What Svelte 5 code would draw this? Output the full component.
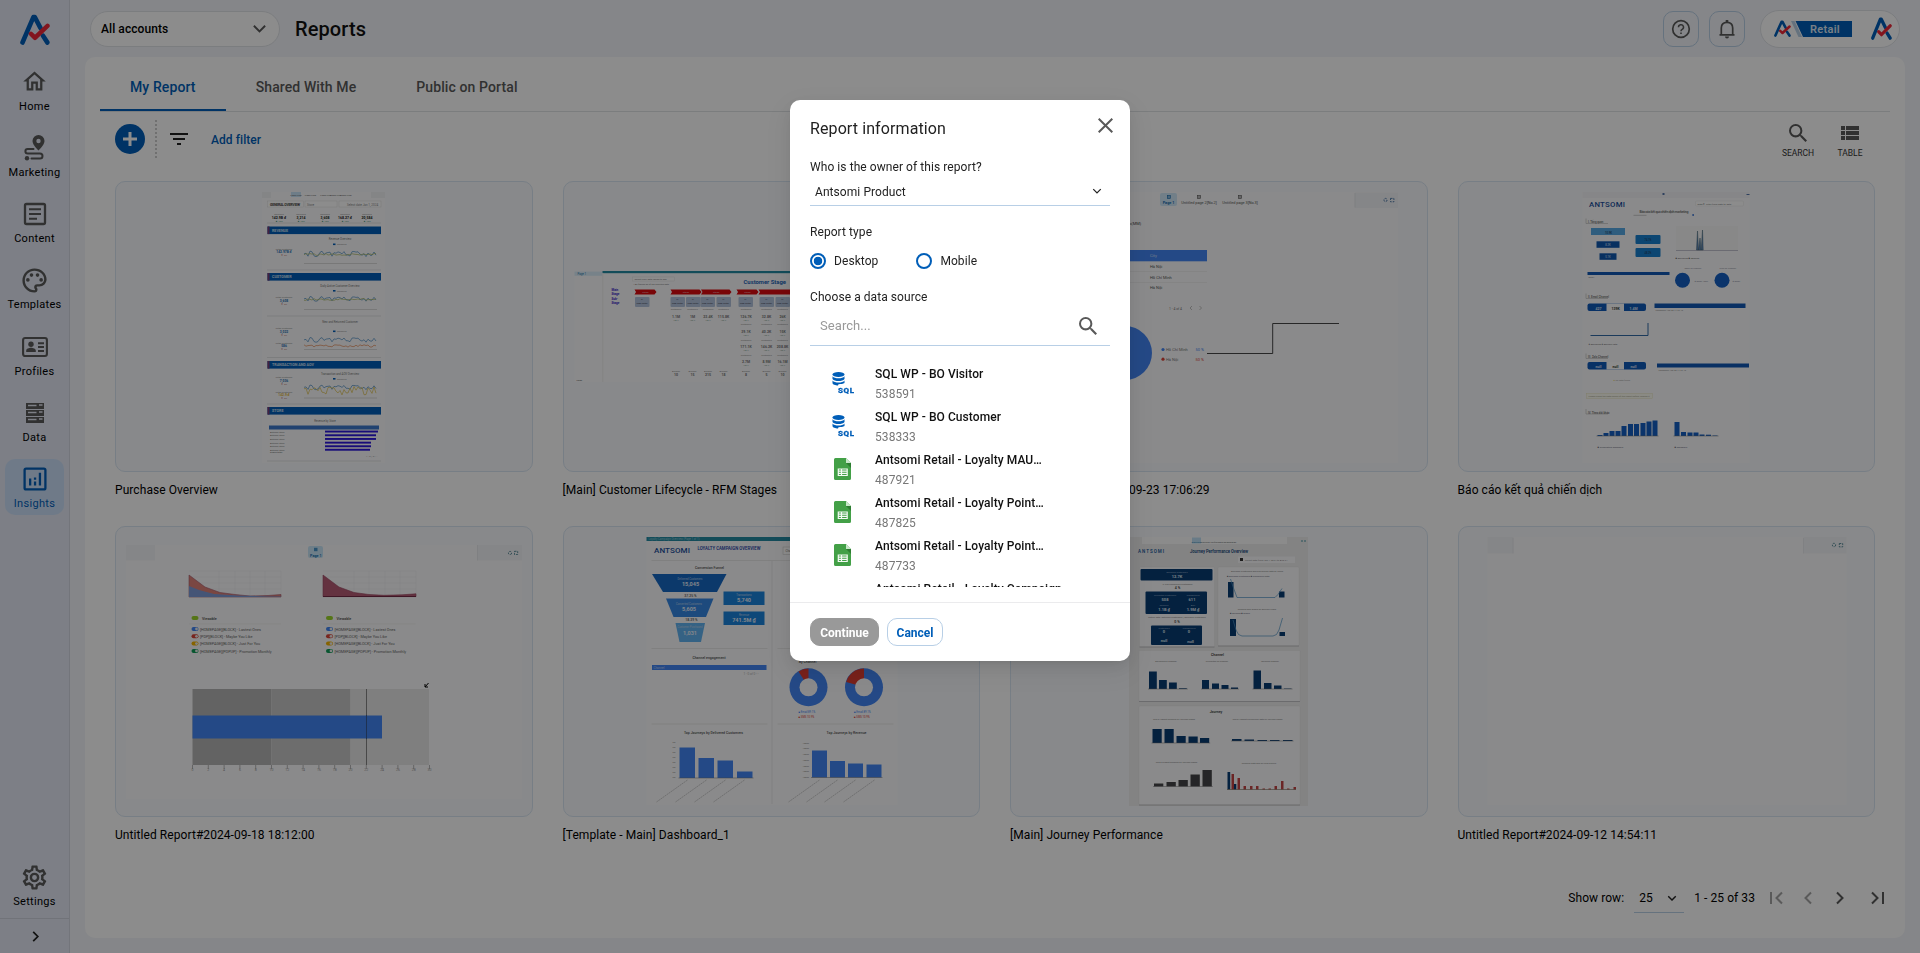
<script>
  const nav = [
    { label: 'Home', icon: 'home' },
    { label: 'Marketing', icon: 'marketing' },
    { label: 'Content', icon: 'content' },
    { label: 'Templates', icon: 'templates' },
    { label: 'Profiles', icon: 'profiles' },
    { label: 'Data', icon: 'data' },
    { label: 'Insights', icon: 'insights', active: true }
  ];
  const tabs = ['My Report', 'Shared With Me', 'Public on Portal'];
  const reports = [
    { title: 'Purchase Overview', x: 115, y: 181 },
    { title: '[Main] Customer Lifecycle - RFM Stages', x: 562.5, y: 181 },
    { title: 'Untitled Report#2024-09-23 17:06:29', x: 1010, y: 181 },
    { title: 'Báo cáo kết quả chiến dịch', x: 1457.5, y: 181 },
    { title: 'Untitled Report#2024-09-18 18:12:00', x: 115, y: 526 },
    { title: '[Template - Main] Dashboard_1', x: 562.5, y: 526 },
    { title: '[Main] Journey Performance', x: 1010, y: 526 },
    { title: 'Untitled Report#2024-09-12 14:54:11', x: 1457.5, y: 526 }
  ];
  const sources = [
    { name: 'SQL WP - BO Visitor', id: '538591', kind: 'sql' },
    { name: 'SQL WP - BO Customer', id: '538333', kind: 'sql' },
    { name: 'Antsomi Retail - Loyalty MAU…', id: '487921', kind: 'sheet' },
    { name: 'Antsomi Retail - Loyalty Point…', id: '487825', kind: 'sheet' },
    { name: 'Antsomi Retail - Loyalty Point…', id: '487733', kind: 'sheet' },
    { name: 'Antsomi Retail - Loyalty Campaign', id: '', kind: 'none' }
  ];
  // small preview charts
  function wave(x0, x1, y, amp, seed) {
    let s = seed, d = '';
    for (let x = x0; x <= x1; x += 2) {
      s = (s * 73 + 41) % 101;
      d += (d ? 'L' : 'M') + x + ' ' + (y + (s / 101 - 0.5) * amp).toFixed(1);
    }
    return d;
  }
  const kpis = [['142.9B đ', 279], ['3,214', 301], ['3,608', 325], ['168.27 đ', 345], ['20,584', 367]];
  const bands = [['REVENUE', 226.5], ['CUSTOMER', 273], ['TRANSACTION AND AOV', 361], ['STORE', 407]];
  const rev = [[378, 430.6], [376, 434.3], [376, 438], [371, 441.7], [371, 445.3], [370, 448.8]];
  const stageCols = [
    [675.5, ['1.1M'], '10'], [692, ['1M'], '15'], [707.5, ['23.4K'], '215'], [723, ['115.8K'], '18'],
    [745.5, ['126.7K', '39.1K', '171.1K', '2.7M'], '8'], [766, ['32.8K', '40.2K', '146.2K', '8.9M'], '5'],
    [782, ['26K', '15K', '208.8K', '16.1M'], '10']
  ];
  const legend = [['#4285f4', '[HOMEPAGE][BLOCK] - Lastest Ones'], ['#db4437', '[PDP][BLOCK] - Maybe You Like'], ['#f4b400', '[HOMEPAGE][BLOCK] - Just For You'], ['#0f9d58', '[HOMEPAGE][POPUP] - Promotion Monthly']];
  const growth = [[1597, 435], [1603, 433], [1609, 431], [1615, 431], [1621, 426], [1627.5, 424], [1633.5, 424], [1640, 423], [1646, 421.5], [1652, 420.5]];
  const fall = [[1674, 422], [1680.5, 432], [1687, 432.5], [1693, 432.5], [1699, 434.5], [1705.5, 434.7], [1712, 435.5]];
  const red = [[1231.5, 774], [1237.5, 778], [1243.5, 786], [1250, 786], [1256, 786], [1262.5, 788.5], [1268.5, 788.5], [1274.5, 786], [1281, 781], [1287, 788.5], [1293.5, 787]];
</script>

{#snippet logo(w, h)}
  <svg width={w} height={h} viewBox="0 0 30 30" fill="none" stroke-linecap="round" stroke-linejoin="round" preserveAspectRatio="none">
    <path d="M2.500 27.500 13.400 3h1.400l5.600 10.500" stroke="#005eb8" stroke-width="4.600" />
    <path d="m23 21 4.300 6.500" stroke="#005eb8" stroke-width="4.600" />
    <path d="m11 19.200 4 3.800 12.500-11.500" stroke="#ee2737" stroke-width="4.400" />
  </svg>
{/snippet}

{#snippet glyph(name)}
  {#if name === 'home'}
    <svg width="27" height="27" viewBox="0 0 24 24"><path d="m12 5.69 5 4.5V18h-2v-6H9v6H7v-7.81zM12 3 2 12h3v8h6v-6h2v6h6v-8h3z" /></svg>
  {:else if name === 'marketing'}
    <svg width="27" height="27" viewBox="0 0 27 27"><path d="M17.5 1a6 6 0 0 0-6 6c0 4 6 9.500 6 9.500s6-5.500 6-9.500a6 6 0 0 0-6-6zm0 8.200a2.200 2.200 0 1 1 0-4.400 2.200 2.200 0 0 1 0 4.400z" /><path d="M12.500 15H6.700a2.300 2.300 0 0 0 0 4.600H19a2.500 2.500 0 0 1 0 5h-8.500" fill="none" stroke="#595959" stroke-width="2" stroke-linecap="round" /><circle cx="6" cy="24.300" r="2.200" /></svg>
  {:else if name === 'content'}
    <svg width="24" height="24" viewBox="0 0 24 24" fill="none" stroke="#595959"><rect x="2" y="2" width="20" height="20" rx="1.500" stroke-width="2.300" /><path d="M6 7.300h12M6 12h12M6 16.700h8" stroke-width="2" /></svg>
  {:else if name === 'templates'}
    <svg width="29" height="29" viewBox="0 0 24 24"><path d="M12 22C6.490 22 2 17.510 2 12S6.490 2 12 2s10 4.040 10 9c0 3.310-2.690 6-6 6h-1.770c-.28 0-.5.22-.5.5 0 .12.05.23.13.33.41.47.64 1.060.64 1.670A2.500 2.500 0 0 1 12 22m0-18c-4.410 0-8 3.590-8 8s3.590 8 8 8c.28 0 .5-.22.5-.5a.54.54 0 0 0-.14-.35c-.41-.46-.63-1.050-.63-1.650a2.500 2.500 0 0 1 2.500-2.500H16c2.210 0 4-1.790 4-4 0-3.860-3.590-7-8-7" /><circle cx="6.500" cy="11.500" r="1.500" /><circle cx="9.500" cy="7.500" r="1.500" /><circle cx="14.500" cy="7.500" r="1.500" /><circle cx="17.500" cy="11.500" r="1.500" /></svg>
  {:else if name === 'profiles'}
    <svg width="26" height="22" viewBox="0 0 26 22"><rect x="1.100" y="2" width="23.800" height="18" rx="2" fill="none" stroke="#595959" stroke-width="2.100" /><circle cx="9" cy="8.200" r="2.700" /><path d="M4.200 16v-1.500c0-1.800 3-2.800 4.800-2.800s4.800 1 4.800 2.800V16zM16 6.200h6v2h-6zm0 3.900h6v2h-6zm0 3.900h6v2h-6z" /></svg>
  {:else if name === 'data'}
    <svg width="20" height="22" viewBox="0 0 20 22"><path d="M1 1h18v6H1zM1 8h18v6H1zM1 15h18v6H1z" /><path d="M3 3.500h8.500M3 10.500h8.500M3 17.500h8.500M14 3h3.500M14 10h3.500M14 17h3.500" stroke="#e3e8f4" stroke-width="1.500" /></svg>
  {:else if name === 'insights'}
    <svg width="24" height="24" viewBox="0 0 24 24"><rect x="1.600" y="1.600" width="20.800" height="20.800" rx="1.500" fill="none" stroke="#005eb8" stroke-width="2.300" /><path fill="#005eb8" d="M6 11.500h2.300V18.500H6zM10.900 14.500h2.300v4h-2.300zM10.900 10.500h2.300v2.300h-2.300zM15.800 5.700h2.300V18.500h-2.300z" /></svg>
  {:else}
    <svg width="29" height="29" viewBox="0 0 24 24"><path d="M19.430 12.980c.04-.32.07-.64.07-.98s-.03-.66-.07-.98l2.110-1.650c.19-.15.24-.42.12-.64l-2-3.460a.5.5 0 0 0-.61-.22l-2.490 1c-.52-.4-1.080-.73-1.690-.98l-.38-2.650A.49.490 0 0 0 14 2h-4c-.25 0-.46.18-.49.42l-.38 2.650c-.61.25-1.170.59-1.690.98l-2.490-1a.5.5 0 0 0-.61.22l-2 3.460c-.13.22-.07.49.12.64l2.110 1.650c-.04.32-.07.65-.07.98s.03.66.07.98l-2.110 1.650c-.19.15-.24.42-.12.64l2 3.460c.12.22.39.29.61.22l2.490-1c.52.4 1.080.73 1.690.98l.38 2.650c.03.24.24.42.49.42h4c.25 0 .46-.18.49-.42l.38-2.650c.61-.25 1.170-.59 1.690-.98l2.490 1c.23.09.49 0 .61-.22l2-3.460c.12-.22.07-.49-.12-.64zm-1.980-1.710c.04.31.05.52.05.73s-.02.43-.05.73l-.14 1.130.89.7 1.080.84-.7 1.210-1.270-.51-1.040-.42-.9.680c-.43.32-.84.56-1.250.73l-1.060.43-.16 1.130-.2 1.350h-1.400l-.35-2.480-1.060-.43c-.43-.18-.83-.41-1.230-.71l-.91-.7-1.060.43-1.270.51-.7-1.210 1.970-1.540-.14-1.130c-.03-.31-.05-.54-.05-.74s.02-.43.05-.73l.14-1.130-.89-.7-1.080-.84.7-1.210 1.270.51 1.040.42.9-.68c.43-.32.84-.56 1.250-.73l1.060-.43.16-1.130.2-1.350h1.390l.35 2.480 1.060.43c.43.18.83.41 1.230.71l.91.7 1.060-.43 1.270-.51.7 1.210-1.960 1.540zM12 8a4 4 0 1 0 0 8 4 4 0 0 0 0-8m0 6a2 2 0 1 1 0-4 2 2 0 0 1 0 4" /></svg>
  {/if}
{/snippet}

{#snippet chevron(w, dir, color, sw)}
  <svg width={w} height={w} viewBox="0 0 12 12" fill="none" stroke={color} stroke-width={sw}>
    <path d={dir === 'down' ? 'M1.500 3.800 6 8.300l4.500-4.500' : dir === 'right' ? 'M3.500 1 8.500 6l-5 5' : 'M8.500 1l-5 5 5 5'} />
  </svg>
{/snippet}

{#snippet magnifier(s, color)}
  <svg width={s} height={s} viewBox="3 3 17.490 17.490" fill={color}><path d="M15.500 14h-.79l-.28-.27A6.470 6.470 0 0 0 16 9.500 6.500 6.500 0 1 0 9.500 16c1.610 0 3.090-.59 4.230-1.570l.27.28v.79l5 4.990L20.490 19zm-6 0C7.010 14 5 11.990 5 9.500S7.010 5 9.500 5 14 7.010 14 9.500 11.990 14 9.500 14" /></svg>
{/snippet}

{#snippet bars(list, w, base, color)}
  {#each list as [x, y]}<rect {x} {y} width={w} height={base - y} fill={color} />{/each}
  <path d="M{list[0][0] - 1} {base}H{list[list.length - 1][0] + w + 1}" stroke="#777" stroke-width=".5" />
{/snippet}

{#snippet preview(i)}
  {#if i === 0}
    <rect x="262" y="192" width="123" height="271" fill="#fcfcfd" />
    <path d="M262 192h9v6h-9zM371 192h14v6h-14z" fill="#f1f2f5" />
    <rect x="291" y="192" width="10" height="5" fill="#c9e4f8" />
    {#each [296, 310.500, 326, 336, 346] as x}<text {x} y="196" font-size="2.500" text-anchor="middle" fill="#666">Page view</text>{/each}
    <rect x="267.500" y="201" width="36" height="6" fill="#fff" stroke="#ddd" stroke-width=".5" />
    <rect x="305" y="201" width="32" height="6" fill="#fff" stroke="#ddd" stroke-width=".5" />
    <rect x="339" y="201" width="42" height="6" fill="#fff" stroke="#ddd" stroke-width=".5" />
    <text x="270" y="206" font-size="3.500" font-weight="700" textLength="30" fill="#444">GENERAL OVERVIEW</text>
    <text x="307" y="205.500" font-size="3" fill="#888">Store</text><text x="347" y="205.500" font-size="3" fill="#888">Select date Jan 1, 2024</text>
    <path d="M267 223h114" stroke="#e4e4e6" />
    {#each kpis as [t, x]}<text {x} y="215" font-size="2.500" text-anchor="middle" fill="#888">Revenue</text><text {x} y="218.500" font-size="3.500" font-weight="700" text-anchor="middle" fill="#222">{t}</text><text {x} y="221.500" font-size="2.500" text-anchor="middle" fill="#3a8c6b">▲ 12%</text>{/each}
    {#each bands as [t, y]}<rect x="267.500" {y} width="113.500" height="7.600" fill="#005eb8" /><rect x="267.500" {y} width="2" height="7.600" fill="#7d3c74" /><text x="272" y={y + 5.300} font-size="3.700" font-weight="700" fill="#cfe0f2">{t}</text>{/each}
    {#each [270, 316, 357.500, 404, 461] as y}<path d="M267 {y}h114" stroke="#e2e3e6" />{/each}
    {#each [[240, 'Revenue Overview'], [286.500, 'Daily Active Customer Overview'], [323, 'New and Returned Customer'], [374.500, 'Transaction and AOV Overview'], [422, 'Revenue by Store']] as [y, t]}<text x={y > 400 ? 325 : 340} {y} font-size="2.800" text-anchor="middle" fill="#777">{t}</text>{/each}
    {#each [[245, '#005eb8'], [291.500, '#005eb8'], [332, '#005eb8'], [379.500, '#005eb8']] as [y, c]}<rect x="333" y={y - 1.500} width="2.500" height="1.600" fill={c} /><text x="337" {y} font-size="2.500" fill="#888">Revenue</text>{/each}
    {#each [[253, '142.97B đ'], [301.500, '3,608'], [332.500, '3,022'], [347, '586'], [381.500, '7,036'], [396, '142.9 đ']] as [y, t]}<text x="284" y={y - 3.500} font-size="2.500" text-anchor="middle" fill="#888">Total customer</text><text x="284" {y} font-size="3.300" font-weight="700" text-anchor="middle" fill={y > 390 ? '#e3b63a' : '#2b73b7'}>{t}</text><text x="284" y={y + 3} font-size="2.500" text-anchor="middle" fill="#b66">▼ 2%</text>{/each}
    <g fill="none" stroke-width=".7">
      <path d={wave(304, 377, 254, 6, 7)} stroke="#4c8cc4" /><path d={wave(304, 377, 254.500, 2, 17)} stroke="#aab764" />
      <path d={wave(304, 377, 299, 5, 7)} stroke="#4c8cc4" /><path d={wave(304, 377, 299.500, 2, 9)} stroke="#aab764" />
      <path d={wave(304, 377, 340, 5, 7)} stroke="#4c8cc4" /><path d={wave(304, 377, 346, 2.500, 23)} stroke="#e58a55" />
      <path d={wave(304, 377, 387.500, 5, 7)} stroke="#4c8cc4" /><path d={wave(304, 377, 391, 9, 33)} stroke="#dcc04e" />
      <path d="M304 263.500h73M304 309.500h73M304 349.500h73M304 398h73" stroke="#ccc" />
    </g>
    <rect x="269" y="425.500" width="110" height="4" fill="#3d78cc" />
    {#each rev as [x, y]}<rect x="325" {y} width={x - 325} height="1.900" fill="#2c17dc" /><text x="270" y={y + 2} font-size="2.300" fill="#777">Antsomi Store</text>{/each}
    <text x="270" y="453" font-size="2.500" fill="#666">Grand total</text><text x="366" y="456.500" font-size="2.500" fill="#888">1 - 6 / 6 ‹ ›</text>
  {:else if i === 1}
    <rect x="574" y="271" width="395" height="111" fill="#fcfcfd" />
    <rect x="574" y="271.500" width="28" height="4.300" fill="#d9edf9" /><text x="577" y="275" font-size="2.800" fill="#2a75ac">Page 1</text>
    <rect x="602" y="271" width="367" height="2.200" fill="#238aa3" />
    <rect x="632" y="277" width="42" height="4" fill="#fff" stroke="#ddd" stroke-width=".4" /><text x="634" y="280.300" font-size="2.500" fill="#777">Select your date range to see</text><text x="633" y="284.500" font-size="2.300" fill="#777">* All figures as of the selected date</text>
    <text x="743" y="283.500" font-size="6.200" font-weight="700" textLength="42.500" lengthAdjust="spacingAndGlyphs" fill="#1f66b8">Customer Stage</text>
    <text x="611" y="291" font-size="3" font-weight="700" fill="#3422c8">Main</text><text x="611" y="294.500" font-size="3" font-weight="700" fill="#3422c8">Stage</text>
    <text x="611" y="300" font-size="3" font-weight="700" fill="#3422c8">Sub-</text><text x="611" y="304" font-size="3" font-weight="700" fill="#3422c8">Stage</text>
    {#each [[634, 656], [670, 701], [700.500, 731], [736, 758], [758, 850]] as [a, b]}<path d="M{a} 289.500H{b - 2}l2 2.500-2 2.500H{a}l1.500-2.500z" fill="#dc0a10" /><text x={(a + b) / 2} y="293" font-size="2.500" text-anchor="middle" fill="#f3b5b5">Stage</text>{/each}
    {#each [634.500, 670, 685.500, 700, 716, 738, 759, 775] as x}<rect {x} y="297" width="14.500" height="10" rx="1" fill="#b3c4dc" /><text x={x + 7} y="300" font-size="2" text-anchor="middle" fill="#445">01</text><text x={x + 7} y="303.500" font-size="2.200" text-anchor="middle" fill="#334">New visitor</text>{/each}
    {#each stageCols as [x, vals, n]}
      {#each vals as v, k}<text {x} y={310 + k * 15.300} font-size="2.200" text-anchor="middle" fill="#888">Customers</text><text {x} y={317.500 + k * 15} font-size="3.500" font-weight="700" text-anchor="middle" fill="#777">{v}</text><text {x} y={320.500 + k * 15} font-size="2" text-anchor="middle" fill="#7a9a8a">100 %</text>{/each}
      <text {x} y="372" font-size="2.200" text-anchor="middle" fill="#888">Average</text><text {x} y="375.500" font-size="3.500" font-weight="700" text-anchor="middle" fill="#777">{n}</text>
    {/each}
    <text x="576" y="380.500" font-size="2.500" fill="#555">Page</text>
    <path d="M602.300 273v109" stroke="#eee" />
  {:else if i === 2}
    <rect x="1040" y="192" width="358" height="271" fill="#fcfcfd" />
    <path d="M1355 192.500h43V208h-43z" fill="#f3f4f8" /><path d="M1355 193v14.500" stroke="#e5e7ea" />
    <rect x="1160" y="193" width="17" height="13" rx="2" fill="#cfe8f8" />
    <g text-anchor="middle" font-size="3.800"><text x="1168.600" y="204" font-weight="700" fill="#176cb0">Page 1</text><text x="1199" y="204" fill="#555">Untitled page 2[No.2]</text><text x="1240" y="204" fill="#555">Untitled page 3[No.3]</text></g>
    {#each [[1168.800, '#176cb0'], [1199, '#555'], [1240, '#555']] as [x, c]}<rect x={x - 1.500} y="195.500" width="3" height="3" fill={c} fill-opacity=".4" stroke={c} stroke-width=".6" />{/each}
    <g fill="none" stroke="#369" stroke-width=".8" stroke-dasharray="2 1"><circle cx="1385.500" cy="200" r="1.600" /><rect x="1390.500" y="198.400" width="3.400" height="3.400" /></g>
    <text x="1120" y="225" font-size="4" fill="#444">metric(MM)</text>
    <rect x="1060" y="250" width="147" height="11.300" fill="#4285f4" /><text x="1150" y="257" font-size="4" fill="#d3e2fb">City</text>
    <text x="1150" y="267.500" font-size="4" fill="#555">Hà Nội</text><text x="1150" y="278.500" font-size="4" fill="#555">Hồ Chí Minh</text><text x="1150" y="289" font-size="4" fill="#555">Hà Nội</text>
    <path d="M1060 271.500h147M1060 282.500h147" stroke="#ececee" stroke-width=".8" />
    <text x="1169" y="309.500" font-size="4" textLength="13" lengthAdjust="spacingAndGlyphs" fill="#777">1 - 4 of 4</text><path d="m1192 306-2 2 2 2M1199.500 306l2 2-2 2" fill="none" stroke="#999" stroke-width=".6" />
    <circle cx="1125" cy="353" r="27" fill="#4285f4" />
    <circle cx="1163" cy="349.500" r="1.600" fill="#4285f4" /><circle cx="1163" cy="359.200" r="1.600" fill="#db4437" />
    <g font-size="4"><text x="1166" y="351" fill="#777">Hồ Chí Minh</text><text x="1166" y="360.700" fill="#777">Hà Nội</text><text x="1195.500" y="351" fill="#4285f4">50 %</text><text x="1195.500" y="360.700" fill="#db4437">50 %</text></g>
    <path d="M1207 353.500h65.700v-30H1339" fill="none" stroke="#333" stroke-width=".9" />
  {:else if i === 3}
    <rect x="1582" y="192" width="167" height="271" fill="#fcfcfd" /><rect x="1582" y="192" width="167" height="6" fill="#f4f5f8" />
    <rect x="1662" y="193" width="2" height="2" fill="#57a" /><path d="M1746 194.500h3" stroke="#57a" />
    <text x="1588.500" y="206.500" font-size="7.800" textLength="36" font-weight="500" fill="#1b4f9c">ANTSOMI</text>
    <rect x="1695" y="201" width="48" height="5" rx="1" fill="#fff" stroke="#e6e6e6" stroke-width=".5" /><text x="1697" y="204.700" font-size="2.500" fill="#777">Date  ▾  Filter from date to date</text>
    <text x="1639" y="213.300" font-size="3.500" font-weight="600" textLength="49" fill="#777">Báo cáo kết quả chiến dịch marketing</text>
    <path d="M1633 215.300h13" stroke="#999" stroke-width=".5" /><rect x="1692" y="214" width="1.200" height="2" fill="#1b5fd0" />
    {#each [[223, 'I. Tổng quan'], [298, 'II. Email Channel'], [358, 'III. Zalo Channel'], [413.500, 'IV. Theo dõi khác']] as [y, t]}<path d="M1585.500 {y - 4.500}v5h22" fill="none" stroke="#aaa" stroke-width=".5" /><text x="1587.500" y={y} font-size="2.800" font-weight="600" fill="#777">{t}</text>{/each}
    <rect x="1590.500" y="228" width="34" height="7" fill="#57a9e6" /><rect x="1596" y="241.300" width="23" height="6.500" fill="#0f58b0" /><rect x="1599" y="253.300" width="17" height="6.500" fill="#0f58b0" />
    <rect x="1635" y="235" width="25" height="9" rx="1" fill="#1680d0" /><rect x="1635" y="248" width="25" height="9" rx="1" fill="#1680d0" />
    <g font-size="2.600" font-weight="600" text-anchor="middle" fill="#234a70"><text x="1608" y="233.500">10.9K</text><text x="1607.500" y="246" fill="#a9c7ea">8.2K</text><text x="1607.500" y="258" fill="#a9c7ea">5.1K</text><text x="1647.500" y="241">74.1%</text><text x="1647.500" y="254">48.2%</text></g>
    <rect x="1675.500" y="226" width="62" height="24" fill="#f7f7f8" /><path d="M1675.500 250.500h62" stroke="#aab" stroke-width=".7" /><path d="m1696 250 1-19 1 19 1.500-12 1.200 12 1.300-20 .7 20z" fill="#5f87b8" stroke="#467" stroke-width=".5" />
    <text x="1675" y="259" font-size="2.500" fill="#666">■ Delivered   ■ Opened</text>
    <rect x="1587" y="272" width="82" height="3" fill="#1258b4" /><text x="1588" y="277.500" font-size="2.300" fill="#888">Email</text>
    <circle cx="1682" cy="280.300" r="7.500" fill="#1460c4" /><circle cx="1721.500" cy="280.300" r="7.500" fill="#1460c4" />
    <g font-size="2.300" fill="#889"><text x="1684" y="269">Open by channel</text><text x="1719" y="269">Click by channel</text><text x="1694" y="281.500">● Email  100%</text><text x="1732" y="281.500">● Email</text></g>
    {#each [303.500, 362] as y}<rect x="1587" {y} width="58.500" height="7.500" rx="2" fill="#1059b8" /><rect x="1606" {y} width="17.500" height="7.500" fill="#fff" /><g font-size="3.500" font-weight="700" text-anchor="middle"><text x="1598" y={y + 6} fill="#dde8f5">{y > 350 ? 'null' : '427'}</text><text x="1615" y={y + 6} fill="#333">{y > 350 ? 'null' : '139K'}</text><text x="1633" y={y + 6} fill="#dde8f5">{y > 350 ? 'null' : '1.4M'}</text></g>{/each}
    <rect x="1654" y="303.500" width="91" height="4.500" fill="#1258b4" /><rect x="1656.500" y="363.500" width="92" height="4" fill="#1258b4" />
    <text x="1655" y="311" font-size="2.300" fill="#888">Campaign      120      98      14      22      10</text><text x="1658" y="370.500" font-size="2.300" fill="#888">Campaign      120      98      14      22      10</text>
    <path d="M1590 335.500h57.500V323" fill="none" stroke="#1b5a9c" stroke-width=".9" /><text x="1588" y="344.500" font-size="2.500" fill="#666">● Delivered ● Delivery rate</text>
    <text x="1613" y="381.300" font-size="2.300" fill="#999"><tspan fill="#dccb2e">●</tspan> No data found</text>
    <rect x="1586" y="393.500" width="66" height="5" fill="#fcfbf0" stroke="#e6dfb6" stroke-width=".4" /><text x="1588" y="396.500" font-size="2.300" fill="#998">Please check the data source of this report before viewing it</text>
    {@render bars(growth, 5, 436, '#1460c4')}
    {@render bars(fall, 5, 436, '#1460c4')}
    <text x="1597" y="448" font-size="2.500" fill="#667">■ Cumulative Members</text><text x="1674" y="448" font-size="2.500" fill="#667">■ Members</text>
  {:else if i === 4}
    <rect x="126" y="545" width="396" height="254" fill="#fcfcfd" />
    <path d="M126 545h29v15.500h-29zM477.500 545H522v15.500h-44.500z" fill="#f3f4f7" /><path d="M477.500 545v15.500" stroke="#e1e3e6" stroke-width=".7" />
    <rect x="308" y="546" width="15" height="12" rx="2" fill="#c9e6f7" /><rect x="314" y="547.800" width="3.500" height="3.400" fill="#4a94c8" /><text x="315.800" y="556.500" font-size="3.700" text-anchor="middle" font-weight="700" fill="#1a70b2">Page 1</text>
    <g fill="none" stroke="#3a7787" stroke-width=".8" stroke-dasharray="2 1"><circle cx="510" cy="553" r="1.600" /><rect x="514.500" y="551.300" width="3.200" height="3.200" /></g>
    <g fill="none" stroke="#f1f1f2" stroke-width=".7">{#each [571, 577, 583, 589] as y}<path d="M189 {y}h92M323 {y}h93" />{/each}{#each [219, 235, 250, 265, 281, 354, 369, 385, 400, 416] as x}<path d="M{x} 571v25" />{/each}</g>
    <path d="M189 575l16 12 15 5.500 15 2 15 1.500 18-.5 13-1v2.500h-92z" fill="#de8178" stroke="#a25a70" stroke-width=".6" /><path d="M189 586l10 4 15 4 24 1.500 30 1h13v.5h-92z" fill="#7e9cd8" />
    <path d="M323 575l16 12 15 5.500 15 2 15 .8 18-.5 14-1v2.800h-93z" fill="#b65b75" stroke="#984862" stroke-width=".6" /><path d="M323 596.500h93" stroke="#742b45" />
    {#each [0, 134.500] as dx}
      <rect x={191.500 + dx} y="616" width="7" height="4" rx="2" fill="#9bd52b" /><text x={202 + dx} y="619.500" font-size="3.600" font-weight="600" fill="#555">Viewable</text>
      <path d="M{189 + dx} 624h92" stroke="#e9e9ea" stroke-width=".6" />
      {#each legend as [c, t], k}<rect x={191.500 + dx} y={627 + k * 7.300} width="7" height="4" rx="2" fill={c} /><circle cx={196.500 + dx} cy={629 + k * 7.300} r="1.400" fill="#eee" /><text x={200 + dx} y={630.600 + k * 7.300} font-size="3.800" fill="#666">{t}</text>{/each}
    {/each}
    <path d="m428.500 683-3.500 4M425 684v3h3" fill="none" stroke="#000" stroke-width="1" />
    <rect x="192.500" y="689" width="79" height="76" fill="#b5b5b5" /><rect x="271.500" y="689" width="79" height="76" fill="#c6c6c6" /><rect x="350.500" y="689" width="78.500" height="76" fill="#e7e7e7" />
    <path d="M366.500 689v76" stroke="#777" stroke-width=".9" /><rect x="192.500" y="715.500" width="189.500" height="23" fill="#4285f4" /><path d="M366.500 715v24" stroke="#35507f" stroke-width=".8" />
    {#each Array(16) as _, k}<path d="M{192.500 + k * 15.800} 765v4" stroke="#999" stroke-width=".7" /><text x={192.500 + k * 15.800} y="771" font-size="3.500" text-anchor="middle" fill="#999">{k * 2}</text>{/each}
  {:else if i === 5}
    <rect x="646" y="537" width="251" height="268" fill="#fcfcfd" /><rect x="646" y="537" width="251" height="4" fill="#238aa3" /><text x="648" y="540" font-size="2.800" fill="#9ed0da">Loyalty Campaign Overview (Page 1 of 1)</text>
    <text x="653.500" y="553" font-size="8" textLength="36" font-weight="500" fill="#1b4f9c">ANTSOMI</text>
    <text x="697" y="550" font-size="4.600" font-weight="600" textLength="63" lengthAdjust="spacingAndGlyphs" fill="#2945a8">LOYALTY CAMPAIGN OVERVIEW</text>
    <rect x="782.500" y="547" width="40" height="7.500" fill="#fff" stroke="#ccc" stroke-width=".6" /><text x="785" y="552" font-size="3" fill="#777">Channel</text>
    <path d="M651 560.500h243M651 648.500h116M777 648.500h116M651 724h116M777 724h116" stroke="#dedede" stroke-width=".6" /><path d="M771.500 561v243" stroke="#e2e2e2" stroke-width=".7" />
    <g text-anchor="middle" font-size="3.500" font-weight="500" fill="#555"><text x="709" y="568.500">Conversion Funnel</text><text x="708.500" y="659">Channel engagement</text><text x="713" y="734">Top Journeys by Delivered Customers</text><text x="846" y="734">Top Journeys by Revenue</text><text x="807" y="662.500">By Channel</text><text x="690" y="596.500">37.25 %</text><text x="691" y="620.500">18.39 %</text></g>
    <path d="M651.500 574H726l-9.500 18h-54z" fill="#1668c4" /><path d="M665.500 598.500H713L705.500 617H673z" fill="#3688e4" /><path d="M675 623h29.500l-4 19h-21.500z" fill="#62b2f0" />
    <rect x="723" y="591.500" width="41" height="13.500" fill="#1a83dc" /><rect x="723" y="611.500" width="41" height="13.500" fill="#1a83dc" />
    <g text-anchor="middle" fill="#e8f1fb" font-size="5.500" font-weight="700"><text x="690" y="586">15,045</text><text x="688.500" y="611">5,605</text><text x="689.500" y="634.500">1,031</text><text x="743.500" y="602">5,740</text><text x="743.500" y="622">741.5M ₫</text></g>
    <g text-anchor="middle" fill="#bcd3ee" font-size="2.700"><text x="689.500" y="579.700">Delivered Customers</text><text x="688.500" y="604.700">Converted Customers</text><text x="689.500" y="628">Customer Purchased</text><text x="743.500" y="596">Transactions</text><text x="743.500" y="616">Revenue</text></g>
    <rect x="651.500" y="665" width="114.500" height="5" fill="#4285f4" /><text x="653" y="668.700" font-size="3" fill="#bcd3fb">Channel</text><text x="743" y="675" font-size="3" fill="#aaa">1 - 0 of 0   ‹   ›</text>
    {#each [[808, 'M808 687V668.500A18.500 18.500 0 0 0 798 671.500Z'], [863.500, 'M863.500 687V668.500A18.500 18.500 0 0 0 845.700 682Z']] as [x, d]}<circle cx={x} cy="687.300" r="19" fill="#4285f4" /><path {d} fill="#db3b30" /><circle cx={x} cy="687.300" r="9" fill="#fcfcfd" /><g font-size="2.700" fill="#4285f4"><text x={x - 10} y="713">■ Email  89.1%</text><text x={x - 10} y="717.500" fill="#db3b30">■ SMS  10.9%</text></g>{/each}
    {@render bars([[679, 747.500], [698, 758], [717, 760.500], [736.500, 771.500]], 15.500, 778, '#4285f4')}
    {@render bars([[811.500, 750.500], [829.500, 761], [847.500, 763.500], [866, 764.500]], 15, 777.500, '#4285f4')}
    {#each [687, 706, 725, 744, 819, 837, 855, 874] as x}<path d="M{x} 780l-31 22" stroke="#ccccce" stroke-width="1" stroke-dasharray="2 .6" />{/each}
    {#each [743, 748, 753, 758, 763, 768, 773, 778] as y}<text x="672" {y} font-size="2.500" fill="#888">60</text>{/each}
    {#each [743.500, 749, 755, 760.500, 766.500, 772, 778] as y}<text x="802" {y} font-size="2.500" fill="#888">100M</text>{/each}
  {:else if i === 6}
    <rect x="1129" y="537" width="179" height="269" fill="#eeeeef" /><rect x="1142" y="537" width="145" height="7" fill="#fdfdfd" />
    <rect x="1192" y="537.500" width="9" height="6" fill="#bfe0f6" /><g font-size="2.500" text-anchor="middle" fill="#666"><text x="1196.500" y="542.500" fill="#27a">Overview</text><text x="1213" y="542.500">Journey Performance</text><text x="1230.500" y="542.500">Campaign</text></g><path d="M1301 541h6" stroke="#4a9aa8" stroke-dasharray="2 1" />
    <text x="1138" y="552.500" font-size="4.500" font-weight="600" textLength="26" fill="#1c5c9a">ANTSOMI</text>
    <text x="1190" y="552.500" font-size="4.500" font-weight="600" textLength="58" lengthAdjust="spacingAndGlyphs" fill="#174a7c">Journey Performance Overview</text>
    <rect x="1238" y="556.500" width="57" height="6.500" fill="#fcfcfd" /><rect x="1240" y="558" width="3" height="3" fill="#333" /><text x="1245" y="561" font-size="2.500" fill="#888">Select date  from Jan 1 2024 to Aug 31</text>
    {#each [[1139.500, 567, 75, 80], [1218, 567, 81, 79], [1139, 650.500, 161, 51], [1139, 706, 161, 99]] as [x, y, w, h]}<rect {x} {y} width={w} height={h} rx="1" fill="#fcfcfd" stroke="#ddd" stroke-width=".3" /><path d="M{x} {y + h}h{w}" stroke="#b9b9bb" stroke-width=".8" />{/each}
    <rect x="1140.500" y="569" width="72" height="11.500" rx="1" fill="#083d74" /><rect x="1145.500" y="591.500" width="61.500" height="22.500" rx="1" fill="#083d74" /><rect x="1151" y="625.500" width="51" height="19.500" rx="1" fill="#083d74" />
    <g text-anchor="middle" font-size="4" font-weight="700" fill="#dce6f1"><text x="1177" y="577.500">12.7K</text><text x="1165" y="600.500">508</text><text x="1192" y="600.500">611</text><text x="1164" y="610.500">1.1B ₫</text><text x="1193" y="610.500">1.9M ₫</text><text x="1164" y="633">0</text><text x="1189" y="633">0</text><text x="1164" y="642">null</text><text x="1190.500" y="643">null</text></g>
    <g text-anchor="middle" font-size="2.300" fill="#9eb4cc"><text x="1177" y="573">Delivered Customers</text><text x="1165" y="595.500">Converted Customers</text><text x="1193" y="595.500">Transactions</text><text x="1164" y="606">Revenue</text><text x="1193" y="606">AOV</text><text x="1164" y="628.500">Customers</text><text x="1189" y="628.500">Transactions</text></g>
    <g text-anchor="middle" font-size="2.300" fill="#777"><text x="1177.500" y="585">% The Conversion Customers</text><text x="1177" y="618">Return Rate: Returned Customers / Delivered Customers</text><text x="1257" y="572">Delivered Customers and Conversion Rate by Trend</text><text x="1257" y="609.500">Revenue and Orders by Delivery Trend</text><text x="1166" y="661.500">Delivered by Channel</text><text x="1217" y="661.500">Converted by Channel</text><text x="1270" y="661.500">Revenue Channel</text><text x="1174" y="720">Top 5 Highest Revenue by Journey Name</text><text x="1257.500" y="720">Top 5 Highest Conversion Rate by Journey Name</text><text x="1176.500" y="763">Top 5 Lowest Revenue by Journey Name</text><text x="1259" y="764">Revenue Rate and by UTM Source</text></g>
    <g text-anchor="middle" font-size="3.500" font-weight="600" fill="#444"><text x="1177.500" y="589">4 %</text><text x="1177" y="622.500">0 %</text><text x="1217.500" y="656">Channel</text><text x="1216" y="713">Journey</text></g>
    <g font-size="2.300" fill="#667"><text x="1227" y="577">■ Delivered Customers  ■ Conversion Rate</text><text x="1230" y="614">■ Revenue   ■ Orders</text></g>
    <rect x="1228" y="582" width="5.500" height="15.500" fill="#083d74" /><rect x="1279" y="591.500" width="5.500" height="6" fill="#083d74" /><rect x="1230" y="619" width="6" height="17" fill="#083d74" /><rect x="1279.500" y="632" width="5.500" height="4" fill="#083d74" />
    <g fill="none" stroke="#5093c6" stroke-width=".7"><path d="M1230.500 579l3 9 3.500 9.500h38l3-3 4-6M1233 620l3 10q2 6 6 6h31q4 0 6-6l3.500-12" /></g>
    {@render bars([[1149, 671.500], [1159, 680], [1169, 682.500], [1179, 688.300]], 7.800, 689, '#083d74')}
    {@render bars([[1202, 680], [1212, 683.500], [1221.500, 685], [1231, 687.500]], 7, 689, '#083d74')}
    {@render bars([[1253.500, 670.500], [1264, 683], [1274, 685.500], [1284, 688.600]], 7.500, 689, '#083d74')}
    {@render bars([[1152.500, 729], [1164.500, 729], [1176.500, 736], [1188.500, 736.500], [1200, 738]], 9.200, 743, '#083d74')}
    {@render bars([[1232, 739], [1244.500, 739.500], [1257.500, 740], [1270, 740], [1283, 740]], 9.500, 741, '#083d74')}
    {@render bars([[1154, 783.500], [1166.500, 782], [1178.500, 780], [1190.500, 774.500], [1202.500, 770]], 9.300, 786.500, '#444447')}
    {#each red as [x, y]}<rect {x} {y} width="2.500" height={789.500 - y} fill="#c34444" />{/each}
    <path d="M1227.500 789.500V772h2.700v17.500zM1234 789.500v-5.500h2.300v5.500z" fill="#083d74" /><path d="M1227 789.500h69" stroke="#765" stroke-width=".6" />
  {:else}
    <rect x="1487" y="537" width="359" height="268" fill="#fcfcfd" /><path d="M1487 537h26v16.500h-26zM1803 537h43v16.500h-43z" fill="#f3f4f7" /><path d="M1512.500 538v15.500M1803 538v15.500" stroke="#e3e5e8" stroke-width=".7" />
    <g fill="none" stroke="#3a7787" stroke-width=".8" stroke-dasharray="2 1"><circle cx="1833.500" cy="545" r="1.700" /><rect x="1838.800" y="543.500" width="3.400" height="3.400" /></g>
  {/if}
{/snippet}

<div class="app">
  <nav class="side">
    <div class="brand">{@render logo(30, 31)}</div>
    {#each nav as n}
      <div class="item" class:active={n.active}><div class="gl">{@render glyph(n.icon)}</div><span>{n.label}</span></div>
    {/each}
    <div class="item last"><div class="gl">{@render glyph('settings')}</div><span>Settings</span></div>
    <div class="expand">{@render chevron(11, 'right', '#222', 1.9)}</div>
  </nav>
  <div class="page">
    <header>
      <div class="account"><span>All accounts</span>{@render chevron(15, 'down', '#595959', 1.5)}</div>
      <h1>Reports</h1>
      <div class="sq"><svg width="20" height="20" viewBox="0 0 20 20" fill="none" stroke="#595959"><circle cx="10" cy="10" r="8.300" stroke-width="1.700" /><path d="M7.500 8.300a2.500 2.500 0 1 1 3.700 2.100c-.8.500-1.200.9-1.200 1.900" stroke-width="1.500" /><path d="M10 13.400V15" stroke-width="1.600" /></svg></div>
      <div class="sq"><svg width="20" height="20" viewBox="0 0 20 20"><path d="M4.300 15.700V9c0-3.200 2-5.700 5.700-5.700s5.700 2.500 5.700 5.700v6.700" fill="none" stroke="#595959" stroke-width="1.700" /><path d="M2.500 15h15v1.700h-15zM8.700 1h2.600v2H8.700zM8 17.500h4A2 2 0 0 1 8 17.500" fill="#595959" /></svg></div>
      <div class="portal">
        <div class="retail">
          {@render logo(17, 17)}
          <svg width="61" height="18" viewBox="0 0 61 18"><path d="M0 1h3.500L11 17H7.500z" fill="#b8cfe6" /><path d="M4.500 1H61v16H12z" fill="#005eb8" /><text x="19" y="13.200" font-size="11" font-weight="600" letter-spacing=".3" fill="#dce8f4">Retail</text></svg>
        </div>
        {@render logo(21, 23)}
      </div>
    </header>
    <main>
      <div class="tabs">{#each tabs as t, i}<div class="tab" class:on={i === 0}>{t}</div>{/each}</div>
      <div class="tools">
        <div class="plus"><svg width="14" height="14" viewBox="0 0 14 14"><path d="M5.500 0h3v5.500H14v3H8.500V14h-3V8.500H0v-3h5.500z" fill="#fff" /></svg></div>
        <div class="dots"></div>
        <svg class="fi" width="18" height="12" viewBox="0 0 18 12"><path d="M0 0h18v2H0zM3 5h12v2H3zM7 10h4v2H7z" fill="#222" /></svg>
        <span class="add">Add filter</span>
        <div class="act search">{@render magnifier(18, '#595959')}<span>SEARCH</span></div>
        <div class="act table"><svg width="18" height="18" viewBox="0 0 18 18" fill="#595959"><path d="M0 2h4v4H0zM5 2h13v4H5zM0 7h4v4H0zM5 7h13v4H5zM0 12h4v4H0zM5 12h13v4H5z" /></svg><span>TABLE</span></div>
      </div>
      <div class="grid">
        {#each reports as r, i}
          <div class="report">
            <div class="thumb"><svg width="100%" height="100%" viewBox="{r.x + 1} {r.y + 1} 415.500 288.500">{@render preview(i)}</svg></div>
            <div class="title">{r.title}</div>
          </div>
        {/each}
      </div>
      <div class="pager">
        <span>Show row:</span>
        <div class="rows"><span>25</span>{@render chevron(10, 'down', '#222', 1.7)}</div>
        <span class="range">1 - 25 of 33</span>
        <div class="moves">
          <svg width="13" height="14" viewBox="0 0 13 14" fill="none" stroke="#a5a5a5" stroke-width="2"><path d="M1 1v12M12 1.500 6.500 7l5.500 5.500" /></svg>
          <svg width="8" height="14" viewBox="0 0 8 14" fill="none" stroke="#a5a5a5" stroke-width="2"><path d="M7 1.500 1.500 7 7 12.500" /></svg>
          <svg width="8" height="14" viewBox="0 0 8 14" fill="none" stroke="#595959" stroke-width="2"><path d="M1 1.500 6.500 7 1 12.500" /></svg>
          <svg width="13" height="14" viewBox="0 0 13 14" fill="none" stroke="#595959" stroke-width="2"><path d="M12 1v12M1 1.500 6.500 7 1 12.500" /></svg>
        </div>
      </div>
    </main>
  </div>
</div>

<div class="mask">
  <div class="modal">
    <div class="head"><h2>Report information</h2><svg width="15" height="15" viewBox="0 0 15 15" stroke="#595959" stroke-width="2"><path d="m.7.7 13.600 13.600M14.300.7.7 14.300" /></svg></div>
    <div class="label">Who is the owner of this report?</div>
    <div class="select"><span>Antsomi Product</span>{@render chevron(10, 'down', '#222', 1.5)}</div>
    <div class="label type">Report type</div>
    <div class="radios">
      <div class="radio"><i class="ring checked"></i>Desktop</div>
      <div class="radio"><i class="ring"></i>Mobile</div>
    </div>
    <div class="label src">Choose a data source</div>
    <div class="find"><span>Search...</span>{@render magnifier(18, '#595959')}</div>
    <div class="list">
      {#each sources as s}
        <div class="row">
          <div class="ico">
            {#if s.kind === 'sql'}
              <svg width="22" height="22" viewBox="0 0 22 22" fill="#005eb8"><ellipse cx="6.500" cy="2.500" rx="6" ry="2.500" /><path d="M.5 4.200c1 1.500 3.500 2 6 2s5-.5 6-2V7c-1 1.500-3.500 2-6 2s-5-.5-6-2zM.5 8.600c1 1.400 3.500 2 6 2s5-.6 6-2V11c-1.500.8-3.500 1.200-6 1.200L6 13.500c-2.500 0-5.500-1-5.500-2.500z" /><text x="6" y="20.600" font-size="8" font-weight="800" textLength="16" stroke="#005eb8" stroke-width=".3">SQL</text></svg>
            {:else if s.kind === 'sheet'}
              <svg class="sheet" width="17" height="22" viewBox="0 0 17 22"><path d="M1.500 0H12l5 5v15.500a1.500 1.500 0 0 1-1.500 1.500h-14A1.500 1.500 0 0 1 0 20.500v-19A1.500 1.500 0 0 1 1.500 0z" fill="#43a047" /><path d="M12 0v5h5z" fill="#c8e6c9" /><path d="M12 5h5v5z" fill="#2e7d32" /><path d="M4.300 11h8.900v6.500H4.300zM4.300 13.200h8.900M4.300 15.300h8.900M7.500 11v6.500" fill="none" stroke="#f4faf4" stroke-width="1.200" /></svg>
            {/if}
          </div>
          <div class="txt"><div class="name">{s.name}</div><div class="id">{s.id}</div></div>
        </div>
      {/each}
    </div>
    <div class="foot"><button class="go">Continue</button><button class="no">Cancel</button></div>
  </div>
</div>

<style>
  :global(body) { margin: 0; font-family: Roboto, 'Liberation Sans', sans-serif; font-size: 12px; color: #000; overflow: hidden; letter-spacing: .07px; }
  * { box-sizing: border-box; }
  svg { display: block; flex: none; font-family: Roboto, sans-serif; letter-spacing: 0; }
  .app { display: flex; height: 953px; background: #f3f5f9; }
  .side { width: 70px; height: 953px; display: flex; flex-direction: column; align-items: center; background: #e3e8f4; border-right: 1px solid #d2d6e0; }
  .brand { height: 61.500px; padding-top: 14px; }
  .item { width: 59px; height: 56px; margin-bottom: 10.300px; flex: none; border-radius: 10px; display: flex; flex-direction: column; align-items: center; font-size: 11px; font-weight: 400; line-height: 14px; fill: #595959; letter-spacing: .3px; }
  .item span { white-space: nowrap; }
  .gl { height: 40px; margin-bottom: -2px; display: flex; align-items: center; justify-content: center; }
  .active { background: #cbdff8; color: #005eb8; }
  .last { margin-top: auto; margin-bottom: 5px; }
  .expand { width: 100%; height: 35px; padding-left: 1px; border-top: 1px solid #ced2dc; display: flex; align-items: center; justify-content: center; }
  .page { flex: 1; display: flex; flex-direction: column; padding: 0 15px 15px; }
  header { height: 57px; display: flex; align-items: center; padding: 0 5px 0 5px; gap: 10px; }
  .account { width: 190px; height: 36px; border-radius: 18px; background: #fff; border: 1px solid #e0e3e8; display: flex; align-items: center; justify-content: space-between; padding: 0 12px 0 10px; font-weight: 500; }
  .account span { padding-top: 1px; }
  h1 { font-size: 20px; font-weight: 500; margin: 0 auto 0 5px; color: #111; letter-spacing: .1px; }
  .sq { width: 36px; height: 36px; border: 1px solid #b8cfe6; border-radius: 10px; display: flex; align-items: center; justify-content: center; }
  .portal { width: 140px; height: 38px; margin-left: 5px; border-radius: 19px; background: #fff; border: 1px solid #e0e3e8; display: flex; align-items: center; justify-content: space-between; padding: 0 7px 0 13px; }
  .retail { display: flex; align-items: center; }
  main { flex: 1; background: #fff; border-radius: 10px; padding: 0 15px; display: flex; flex-direction: column; }
  .tabs { display: flex; height: 55px; border-bottom: 1px solid #e0e3e6; }
  .tab { padding: 2px 30px 0; height: 54px; line-height: 56px; font-size: 14px; font-weight: 500; color: #595959; border-bottom: 2px solid transparent; letter-spacing: .11px; }
  .on { color: #005eb8; border-color: #005eb8; }
  .tools { display: flex; align-items: center; height: 54px; padding: 0 14px 0 15px; }
  .plus { width: 30px; height: 30px; border-radius: 50%; background: #005eb8; display: flex; align-items: center; justify-content: center; }
  .dots { height: 38px; margin-left: 10px; border-left: 2px dotted #ccc; }
  .fi { margin-left: 13px; }
  .add { margin-left: 23px; padding-top: 1px; color: #005eb8; font-weight: 500; }
  .act { display: flex; flex-direction: column; align-items: center; gap: 6px; font-size: 8.500px; line-height: 10px; font-weight: 400; color: #333; letter-spacing: 0; padding-top: 4px; }
  .search { margin-left: auto; width: 32px; }
  .table { margin: 0 14px 0 24px; width: 24px; }
  .grid { display: grid; grid-template-columns: repeat(4, 1fr); gap: 0 30px; padding: 15px 15px 0; }
  .report { height: 345px; }
  .thumb { height: 290.500px; border: 1px solid #d9e6f3; border-radius: 10px; background: #f8fafd; overflow: hidden; }
  .title { line-height: 16px; margin-top: 10px; }
  .pager { display: flex; align-items: center; justify-content: flex-end; height: 30px; margin-top: 12px; padding-right: 6px; }
  .rows { width: 50px; height: 30px; margin: 0 10px 0 10px; border-bottom: 1px solid #b8cfe6; display: flex; align-items: center; justify-content: space-between; padding: 0 7px 0 5px; }
  .range { margin-right: 15px; }
  .moves { display: flex; align-items: center; gap: 24px; }
  .moves svg:nth-child(2) { margin-left: -3px; }
  .moves svg:nth-child(4) { margin-left: 3px; }
  .mask { position: fixed; inset: 0; background: rgba(0, 0, 0, .45); display: flex; justify-content: center; align-items: flex-start; padding-top: 100px; }
  .modal { width: 340px; height: 561px; background: #fff; border-radius: 10px; box-shadow: 0 6px 16px rgba(0, 0, 0, .08), 0 3px 6px -4px rgba(0, 0, 0, .12), 0 9px 28px 8px rgba(0, 0, 0, .05); display: flex; flex-direction: column; padding: 0 20px; color: #222; }
  .head { display: flex; justify-content: space-between; padding-top: 18px; margin-right: -3px; height: 56px; }
  h2 { font-size: 16px; line-height: 20px; font-weight: 400; margin: 1px 0 0; letter-spacing: .1px; }
  .label { height: 20px; line-height: 20px; margin-top: 1px; }
  .select { height: 29px; border-bottom: 1px solid #b8cfe6; display: flex; align-items: center; justify-content: space-between; padding: 0 8px 0 5px; }
  .select span { padding-top: 1px; }
  .type { margin-top: 16px; }
  .radios { display: flex; gap: 38px; margin-top: 9px; height: 20px; }
  .radio { display: flex; align-items: center; gap: 8px; }
  .ring { width: 16px; height: 16px; border: 2px solid #005eb8; border-radius: 50%; }
  .checked { background: radial-gradient(circle, #005eb8 4px, #fff 4.600px); }
  .src { margin-top: 16px; }
  .find { height: 39px; border-bottom: 1px solid #b8cfe6; display: flex; align-items: center; justify-content: space-between; padding: 0 13px 1px 10px; font-size: 13px; color: #999; }
  .list { height: 241px; overflow: hidden; padding-top: 18px; }
  .row { display: flex; height: 43px; }
  .ico { width: 65px; padding: 8px 0 0 22px; }
  .sql-ico { margin-left: 0; }
  .sheet { margin-left: 2px; }
  .name { line-height: 20px; font-weight: 500; color: #111; white-space: nowrap; }
  .id { line-height: 20px; color: #777; }
  .foot { margin: 15px -20px 0; border-top: 1px solid #ebebed; padding: 15px 20px 0; display: flex; gap: 8px; }
  button { height: 28px; padding: 1px 0 0; border: 1px solid #999; border-radius: 10px; font: 700 12px Roboto, sans-serif; }
  .go { width: 69px; color: #fff; background: #999; }
  .no { width: 56px; color: #005eb8; background: #fff; border-color: #b8cfe6; }
</style>
